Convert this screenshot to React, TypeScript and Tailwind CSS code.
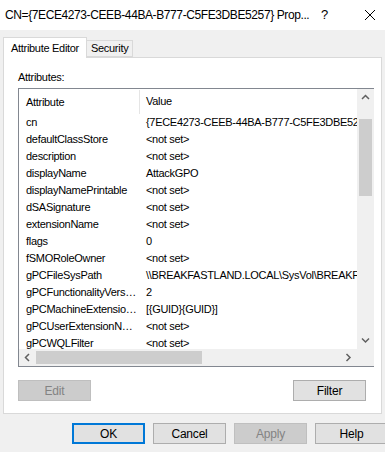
import React from "react";

const rows: [string, string][] = [
  ["cn", "{7ECE4273-CEEB-44BA-B777-C5FE3DBE5257}"],
  ["defaultClassStore", "<not set>"],
  ["description", "<not set>"],
  ["displayName", "AttackGPO"],
  ["displayNamePrintable", "<not set>"],
  ["dSASignature", "<not set>"],
  ["extensionName", "<not set>"],
  ["flags", "0"],
  ["fSMORoleOwner", "<not set>"],
  ["gPCFileSysPath", "\\\\BREAKFASTLAND.LOCAL\\SysVol\\BREAKFASTLAND.LOCAL\\Policies"],
  ["gPCFunctionalityVersion", "2"],
  ["gPCMachineExtensionNames", "[{GUID}{GUID}]"],
  ["gPCUserExtensionNames", "<not set>"],
  ["gPCWQLFilter", "<not set>"],
];

function Chevron({ dir }: { dir: "up" | "down" | "left" | "right" }) {
  const d = {
    up: "M1 5 L4.5 1.5 L8 5",
    down: "M1 1.5 L4.5 5 L8 1.5",
    left: "M5 1 L1.5 4.5 L5 8",
    right: "M1.5 1 L5 4.5 L1.5 8",
  }[dir];
  const w = dir === "up" || dir === "down" ? 9 : 7;
  const h = dir === "up" || dir === "down" ? 7 : 9;
  return (
    <svg width={w} height={h} viewBox={`0 0 ${w} ${h}`}>
      <path d={d} fill="none" stroke="#606060" strokeWidth="1.5" />
    </svg>
  );
}

function Btn({ label, disabled, primary }: { label: string; disabled?: boolean; primary?: boolean }) {
  return (
    <div
      className={
        "flex h-[21px] w-[73px] shrink-0 items-center justify-center text-[12px] tracking-[-0.2px] " +
        (disabled
          ? "border border-[#bfbfbf] bg-[#cccccc] text-[#838383]"
          : primary
          ? "border-2 border-[#0078d7] bg-[#e1e1e1] text-black"
          : "border border-[#adadad] bg-[#e1e1e1] text-black")
      }
    >
      {label}
    </div>
  );
}

export default function App() {
  return (
    <div className="relative h-[452px] w-[385px] overflow-hidden bg-[#f0f0f0] text-black" style={{ fontFamily: '"Liberation Sans", Arial, sans-serif' }}>
      {/* title bar */}
      <div className="flex h-[30px] items-center bg-white pl-[5px] text-[12px]">
        <span className="w-[316px] shrink-0 whitespace-nowrap tracking-[-0.4px]">CN={"{"}7ECE4273-CEEB-44BA-B777-C5FE3DBE5257{"}"} Prop...</span>
        <span className="w-[43px] shrink-0 text-[13px]">?</span>
        <svg width="12" height="12" viewBox="0 0 12 12">
          <path d="M1 1 L11 11 M11 1 L1 11" stroke="#000" strokeWidth="1" />
        </svg>
      </div>

      {/* tabs */}
      <div className="flex h-[27px] items-end pl-[3px] text-[11px] tracking-[-0.3px]">
        <div className="relative z-10 -mb-px flex h-[21px] w-[84px] items-center border border-b-0 border-[#d9d9d9] bg-white pl-[7px]">
          Attribute Editor
        </div>
        <div className="flex h-[17px] w-[46px] items-center border border-l-0 border-[#d9d9d9] bg-[#f0f0f0] pl-[4px]">
          Security
        </div>
      </div>

      {/* panel */}
      <div className="mx-[3px] h-[357px] border border-[#d9d9d9] bg-white px-[14px] pt-[11px] text-[11px] tracking-[-0.3px]">
        <div className="h-[19px]">Attributes:</div>

        <div className="grid h-[279px] w-[356px] grid-cols-[338px_17px] grid-rows-[260px_17px] border border-[#828790]">
          <div className="overflow-hidden">
            <div className="flex h-[25px] items-center">
              <div className="w-[121px] shrink-0 border-r border-[#e5e5e5] pl-[7px] leading-[24px]">Attribute</div>
              <div className="pl-[6px]">Value</div>
            </div>
            {rows.map(([a, v]) => (
              <div key={a} className="flex h-[17px] items-center whitespace-nowrap">
                <div className="w-[121px] shrink-0 overflow-hidden text-ellipsis pl-[7px] pr-[3px]">{a}</div>
                <div className="shrink-0 pl-[6px]">{v}</div>
              </div>
            ))}
          </div>

          <div className="flex flex-col items-center bg-[#f0f0f0]">
            <div className="flex h-[17px] items-center">
              <Chevron dir="up" />
            </div>
            <div className="mt-[13px] h-[77px] w-[13px] bg-[#cdcdcd]" />
            <div className="flex-1" />
            <div className="flex h-[17px] items-center">
              <Chevron dir="down" />
            </div>
          </div>

          <div className="flex items-center bg-[#f0f0f0]">
            <div className="flex w-[17px] justify-center">
              <Chevron dir="left" />
            </div>
            <div className="h-[13px] w-[166px] bg-[#cdcdcd]" />
            <div className="flex-1" />
            <div className="flex w-[17px] justify-center">
              <Chevron dir="right" />
            </div>
          </div>
          <div className="bg-[#f0f0f0]" />
        </div>

        <div className="mt-[13px] flex justify-between pr-[1px]">
          <Btn label="Edit" disabled />
          <Btn label="Filter" />
        </div>
      </div>

      {/* footer */}
      <div className="mt-[9px] flex gap-[8px] pl-[72px]">
        <Btn label="OK" primary />
        <Btn label="Cancel" />
        <Btn label="Apply" disabled />
        <Btn label="Help" />
      </div>
    </div>
  );
}
